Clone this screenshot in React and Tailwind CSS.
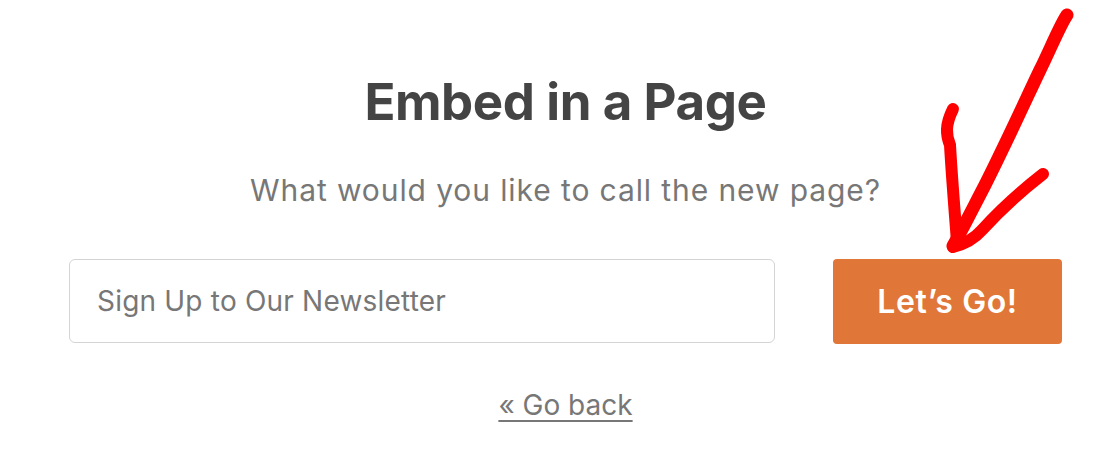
export default function App() {
  return (
    <div className="relative w-[1116px] h-[453px] bg-white overflow-hidden font-['Inter',sans-serif]">
      <div className="ml-[69px] w-[993px] pt-[70px] flex flex-col items-center">
        <h1 className="text-[51px] leading-[64px] font-bold text-[#444444] tracking-[-0.4px]">Embed in a Page</h1>
        <p className="mt-[36px] text-[30px] leading-[40px] text-[#777777] tracking-[0.9px]">What would you like to call the new page?</p>
        <div className="mt-[49px] w-full flex gap-[58px]">
          <input
            type="text"
            placeholder="Sign Up to Our Newsletter"
            className="flex-1 h-[84px] rounded-[6px] border border-[#d4d4d4] px-[27px] text-[28px] tracking-[0.2px] text-[#444] placeholder:text-[#777777] outline-none"
          />
          <button className="w-[229px] h-[85px] rounded-[4px] bg-[#e07638] text-white text-[32px] font-semibold tracking-[0.6px]">
            Let’s Go!
          </button>
        </div>
        <a href="#" className="mt-[43px] text-[28px] leading-[36px] text-[#777777] underline underline-offset-[5px]">« Go back</a>
      </div>
      <svg className="absolute left-0 top-0 pointer-events-none" width="1116" height="453" viewBox="0 0 1116 453" fill="none">
        <path d="M1067 15 C1060 25 1050 50 1040 70 C1028 95 1010 135 985 185 C972 210 962 230 953 246" stroke="#ff0000" strokeWidth="13" strokeLinecap="round" />
        <path d="M953 109 C945 125 946 135 950 145 C952 180 955 215 957 242" stroke="#ff0000" strokeWidth="12" strokeLinecap="round" />
        <path d="M1043 174 C1025 188 1000 210 982 230 C975 238 965 244 953 247" stroke="#ff0000" strokeWidth="12" strokeLinecap="round" />
      </svg>
    </div>
  )
}
